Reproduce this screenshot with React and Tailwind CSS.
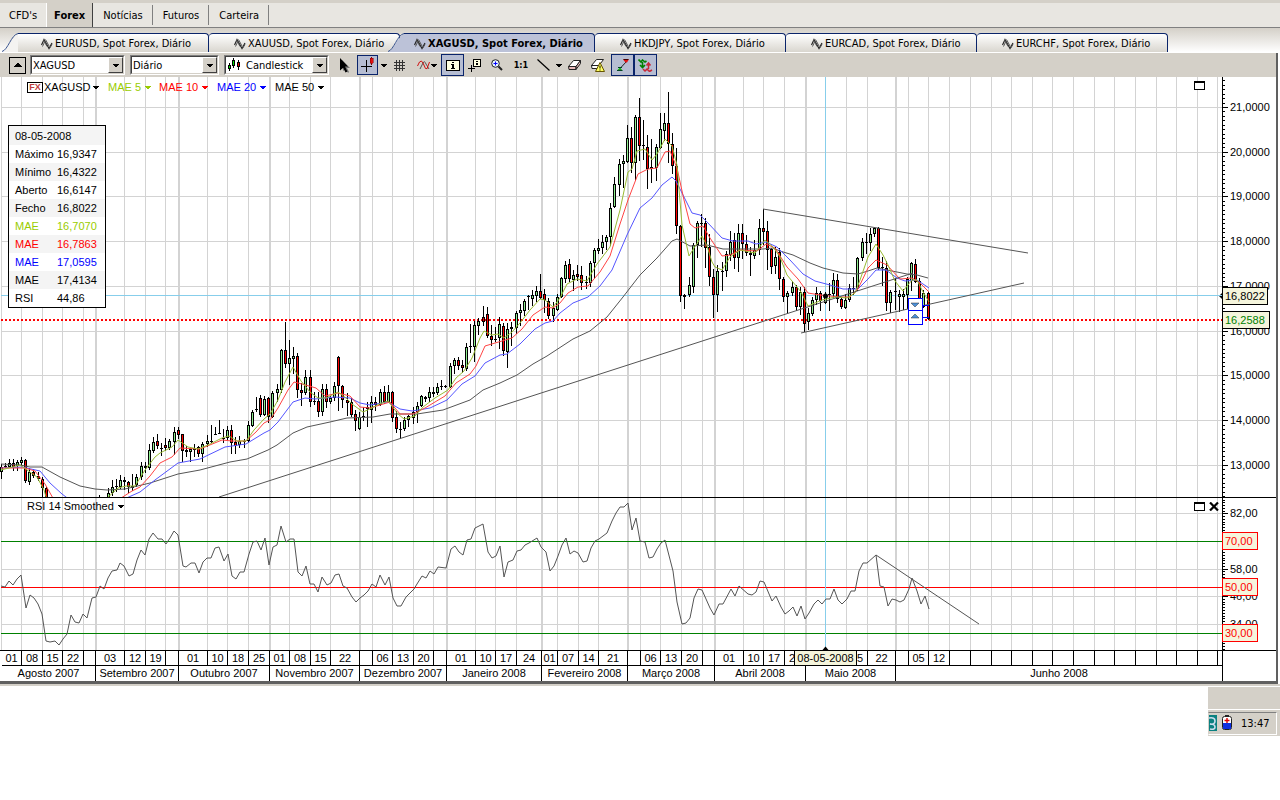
const menuTabs = ["CFD's", 'Forex', 'Notícias', 'Futuros', 'Carteira']

const chartTabs = [
  { label: 'EURUSD, Spot Forex, Diário', slanted: true },
  { label: 'XAUUSD, Spot Forex, Diário' },
  { label: 'XAGUSD, Spot Forex, Diário', active: true },
  { label: 'HKDJPY, Spot Forex, Diário' },
  { label: 'EURCAD, Spot Forex, Diário' },
  { label: 'EURCHF, Spot Forex, Diário' }
]

const infoRows = [
  { label: 'Máximo', value: '16,9347' },
  { label: 'Mínimo', value: '16,4322' },
  { label: 'Aberto', value: '16,6147' },
  { label: 'Fecho', value: '16,8022' },
  { label: 'MAE', value: '16,7070', color: 'text-[#99cc00]' },
  { label: 'MAE', value: '16,7863', color: 'text-[#ff0000]' },
  { label: 'MAE', value: '17,0595', color: 'text-[#0000ff]' },
  { label: 'MAE', value: '17,4134' },
  { label: 'RSI', value: '44,86' }
]

const legend = [
  { label: 'MAE 5', color: 'text-[#99cc00]', width: 'w-[51px]' },
  { label: 'MAE 10', color: 'text-[#ff0000]', width: 'w-[58px]' },
  { label: 'MAE 20', color: 'text-[#0000ff]', width: 'w-[58px]' },
  { label: 'MAE 50', color: 'text-black', width: 'w-[58px]' }
]

// Week columns: [label, width]
const months = [
  { label: 'Agosto 2007', weeks: [['01', 20], ['08', 21], ['15', 20], ['22', 21], ['', 12]] },
  { label: 'Setembro 2007', weeks: [['03', 29], ['12', 21], ['19', 20], ['', 13]] },
  { label: 'Outubro 2007', weeks: [['01', 29], ['10', 20], ['18', 21], ['25', 21]] },
  { label: 'Novembro 2007', weeks: [['01', 20], ['08', 21], ['15', 20], ['22', 29]] },
  { label: 'Dezembro 2007', weeks: [['', 13], ['06', 20], ['13', 21], ['20', 20], ['', 13]] },
  { label: 'Janeiro 2008', weeks: [['01', 29], ['10', 20], ['17', 21], ['24', 25]] },
  { label: 'Fevereiro 2008', weeks: [['01', 16], ['07', 21], ['14', 20], ['21', 29]] },
  { label: 'Março 2008', weeks: [['', 13], ['06', 20], ['13', 21], ['20', 21], ['', 12]] },
  { label: 'Abril 2008', weeks: [['01', 29], ['10', 20], ['17', 21], ['24', 21]] },
  { label: 'Maio 2008', weeks: [['', 20], ['', 21], ['15', 21], ['22', 28]] },
  {
    label: 'Junho 2008',
    weeks: [
      ['', 13], ['05', 20], ['12', 21], ['', 21], ['', 21], ['', 20], ['', 21], ['', 20],
      ['', 21], ['', 21], ['', 20], ['', 21], ['', 21], ['', 20], ['', 21], ['', 20]
    ]
  }
]

function buildGrid() {
  const lines = [{ x: 1, month: false }]
  let x = 1
  months.forEach((m, mi) => {
    m.weeks.forEach(([, width], wi) => {
      x += width
      lines.push({ x, month: wi === m.weeks.length - 1 && mi < months.length - 1 })
    })
  })
  return lines
}

const gridLines = buildGrid()

// Candles: [high, body top, body bottom, low, direction]
const U = 1
const D = -1
const N = 0
const gap = [600, 600, 600, 600, N]
const candles = [
  [464, 467, 472, 479, U], [463, 466, 467, 468, N], [459, 463, 467, 468, U], [459, 463, 467, 471, D],
  [460, 462, 466, 471, U], [457, 460, 463, 466, U], [459, 460, 481, 483, D], [468, 472, 482, 485, U],
  [469, 472, 476, 478, D], [472, 476, 479, 481, D], [477, 479, 488, 497, D], [487, 488, 499, 500, D],
  gap, gap, gap, gap, gap, gap, gap, gap, gap, gap, gap, gap,
  [495, 498, 499, 500, U], gap, [488, 493, 498, 499, U], [480, 487, 493, 496, U],
  [479, 486, 487, 492, N], [475, 480, 487, 489, U], [477, 480, 482, 490, D], [481, 482, 487, 493, D],
  [474, 486, 488, 491, D], [474, 477, 485, 487, U], [462, 466, 477, 480, U], [462, 466, 468, 473, D],
  [444, 450, 468, 470, U], [437, 442, 451, 453, U], [434, 441, 446, 449, D], [443, 448, 449, 456, N],
  [438, 445, 448, 451, D], [439, 441, 448, 450, U], [427, 432, 442, 455, U], [427, 430, 435, 439, D],
  [434, 434, 451, 462, D], [446, 450, 452, 457, D], [447, 449, 452, 462, U], [444, 448, 450, 457, D],
  [446, 447, 454, 457, D], [442, 444, 454, 462, U], [435, 441, 444, 447, U], [425, 441, 442, 443, N],
  [427, 434, 435, 435, N], [420, 433, 434, 434, N], [429, 438, 439, 443, N], [426, 430, 438, 441, U],
  [425, 430, 443, 454, D], [437, 442, 446, 454, D], [436, 441, 445, 448, U], [439, 441, 442, 448, N],
  [421, 425, 441, 443, U], [410, 412, 426, 427, U], [397, 409, 410, 412, N], [395, 398, 415, 417, D],
  [396, 399, 415, 416, U], [397, 398, 417, 423, D], [391, 393, 417, 418, U], [384, 389, 393, 402, U],
  [349, 350, 390, 393, U], [322, 350, 364, 368, D], [340, 358, 364, 385, U], [347, 356, 359, 374, U],
  [353, 356, 390, 398, D], [383, 390, 393, 406, D], [370, 377, 393, 395, U], [370, 377, 402, 407, D],
  [392, 401, 402, 405, N], [392, 401, 412, 417, D], [384, 389, 412, 416, U], [384, 389, 402, 408, D],
  [396, 398, 402, 404, U], [382, 386, 398, 401, U], [356, 357, 386, 411, D], [385, 386, 400, 408, D],
  [393, 400, 403, 416, D], [398, 402, 415, 417, D], [410, 414, 421, 431, D], [412, 417, 429, 430, U],
  [407, 416, 417, 421, N], [402, 407, 409, 427, D], [396, 402, 410, 423, U], [397, 402, 405, 411, D],
  [389, 392, 405, 406, U], [386, 392, 402, 404, D], [385, 392, 402, 403, U], [391, 392, 418, 422, D],
  [411, 417, 429, 433, D], [422, 429, 430, 439, N], [417, 420, 429, 431, U], [415, 416, 420, 427, U],
  [407, 412, 418, 424, U], [402, 406, 412, 423, U], [395, 396, 406, 407, U], [396, 397, 399, 402, D],
  [387, 392, 398, 402, U], [387, 392, 394, 397, D], [383, 387, 393, 395, U], [380, 386, 387, 390, N],
  [385, 386, 387, 388, N], [363, 366, 387, 388, U], [358, 360, 366, 374, U], [357, 360, 366, 370, D],
  [360, 365, 368, 373, D], [343, 347, 369, 371, U], [324, 346, 347, 353, N], [321, 325, 347, 362, U],
  [318, 321, 326, 335, U], [306, 317, 322, 326, D], [307, 314, 336, 338, D], [325, 336, 340, 346, D],
  [327, 339, 340, 342, N], [317, 324, 338, 349, U], [323, 326, 351, 356, D], [323, 329, 352, 368, U],
  [322, 327, 329, 346, U], [311, 313, 328, 334, U], [304, 310, 313, 326, U], [299, 301, 311, 316, U],
  [295, 296, 297, 310, N], [290, 295, 299, 306, U], [286, 291, 296, 302, U], [274, 291, 298, 299, D],
  [289, 294, 300, 313, D], [298, 301, 316, 319, D], [302, 308, 316, 322, U], [294, 297, 310, 311, U],
  [277, 278, 297, 298, U], [261, 265, 279, 283, U], [259, 264, 279, 282, D], [270, 275, 280, 291, U],
  [265, 274, 277, 281, D], [266, 275, 283, 290, D], [276, 282, 283, 289, N], [261, 263, 283, 287, U],
  [248, 250, 263, 279, U], [239, 248, 251, 254, U], [235, 242, 248, 254, U], [235, 237, 242, 250, U],
  [203, 208, 237, 246, U], [177, 184, 207, 208, U], [159, 164, 185, 196, U], [155, 161, 164, 188, U],
  [125, 138, 162, 163, U], [127, 138, 163, 173, D], [115, 117, 163, 181, U], [98, 117, 146, 161, D],
  [120, 145, 146, 160, N], [135, 147, 169, 189, D], [139, 167, 169, 183, N], [144, 147, 168, 181, U],
  [113, 129, 148, 149, U], [113, 123, 131, 141, U], [92, 123, 144, 163, D], [133, 144, 166, 174, D],
  [148, 166, 226, 234, D], [225, 226, 296, 302, D], [294, 295, 297, 309, N], [277, 285, 295, 297, U],
  [243, 245, 287, 293, U], [221, 223, 245, 258, U], [214, 223, 224, 247, N], [218, 223, 248, 268, D],
  [234, 247, 277, 286, D], [269, 277, 295, 318, D], [265, 271, 295, 312, U], [262, 271, 272, 291, N],
  [251, 254, 271, 277, U], [231, 242, 255, 261, U], [233, 240, 258, 269, D], [224, 233, 258, 272, U],
  [224, 233, 244, 259, D], [235, 244, 253, 256, D], [247, 253, 255, 276, N], [240, 250, 256, 259, U],
  [219, 228, 250, 255, U], [209, 228, 232, 245, D], [221, 231, 250, 270, D], [248, 249, 267, 274, D],
  [247, 257, 266, 274, U], [248, 252, 279, 290, D], [277, 279, 297, 302, D], [291, 293, 297, 313, U],
  [281, 287, 293, 296, U], [285, 287, 307, 311, D], [287, 292, 307, 315, U], [287, 292, 324, 332, D],
  [308, 313, 322, 330, U], [297, 300, 314, 316, U], [287, 293, 300, 305, U], [291, 293, 301, 311, D],
  [292, 295, 303, 304, U], [283, 294, 295, 311, N], [273, 280, 294, 298, U], [274, 280, 299, 303, D],
  [297, 299, 307, 309, D], [294, 300, 308, 309, U], [284, 288, 300, 302, U], [277, 288, 289, 295, N],
  [257, 258, 289, 291, U], [238, 242, 258, 261, U], [233, 242, 243, 254, N], [228, 234, 243, 251, U],
  [227, 228, 234, 237, U], [227, 228, 268, 270, D], [257, 267, 268, 286, N], [261, 268, 303, 311, D],
  [290, 292, 303, 313, U], [278, 291, 292, 310, N], [290, 294, 297, 312, U], [289, 294, 297, 310, U],
  [277, 279, 295, 309, U], [262, 263, 281, 291, U], [259, 264, 282, 283, D], [278, 281, 300, 305, D],
  [290, 293, 307, 308, U], [291, 293, 319, 320, D]
]

const mae5 =
  '1,470 20,465 27,470 37,477 44,490 47,500 105,500 118,488 126,486 135,486 145,470 155,457 160,453 172,447 178,440 188,447 198,449 208,445 222,438 229,436 237,441 246,441 254,430 264,419 270,414 278,400 285,382 293,367 301,381 310,392 318,398 326,398 338,392 346,398 352,404 363,412 372,408 379,404 388,401 398,414 404,419 415,416 423,407 435,398 448,390 456,378 464,371 472,358 480,338 484,331 492,335 498,334 504,338 512,332 520,323 530,310 540,299 545,300 553,307 560,298 567,284 577,279 587,281 597,264 610,247 620,210 628,172 632,169 637,151 645,149 652,160 657,154 665,139 672,146 677,165 682,225 689,256 694,248 702,236 707,246 712,262 715,267 722,270 730,257 740,250 755,253 765,240 773,247 780,257 787,275 797,287 801,292 808,306 822,300 835,297 847,298 855,293 860,280 868,257 876,244 883,255 888,265 895,281 903,291 912,280 917,280 922,290 929,302'
const mae10 =
  '1,468 25,468 35,471 45,484 54,500 118,500 132,491 140,487 150,476 160,463 172,457 180,448 200,449 222,440 232,441 246,441 256,432 264,423 270,420 278,408 288,390 294,382 302,384 316,388 325,396 338,393 350,396 360,407 370,408 390,402 400,414 413,414 425,408 445,396 456,383 470,374 476,366 485,346 495,343 502,341 512,338 522,329 533,315 545,307 553,308 560,303 568,293 578,287 588,286 600,272 610,256 620,224 628,200 638,174 648,169 657,168 665,152 670,151 677,168 684,200 690,224 695,228 703,226 710,238 722,256 730,255 740,250 757,251 766,244 775,248 787,267 798,279 808,293 820,295 840,297 850,297 858,289 868,268 876,260 887,265 900,279 912,278 920,283 929,292'
const mae20 =
  '1,468 22,467 40,471 50,483 62,494 70,500 122,500 140,492 155,480 178,463 200,459 225,447 246,444 264,433 270,430 278,422 293,402 305,398 315,399 335,397 350,398 360,403 370,405 388,402 400,409 412,411 430,408 447,400 462,384 475,376 485,363 500,355 507,354 520,344 535,329 545,323 553,321 560,313 573,303 588,297 600,286 612,270 627,235 640,208 652,198 662,185 672,177 676,181 683,195 692,213 700,215 708,223 722,238 733,241 748,241 756,244 766,242 777,247 790,260 803,274 815,281 830,285 843,289 858,289 868,279 876,270 886,270 897,278 905,281 917,280 929,288'
const mae50 =
  '1,464 20,465 30,467 42,467 60,477 80,486 95,489 107,490 125,489 150,483 178,474 200,470 230,462 247,459 268,450 277,445 293,433 307,427 330,422 347,418 373,417 390,414 417,414 443,410 470,400 483,390 500,383 517,375 533,364 547,356 573,339 590,331 607,317 623,297 640,275 657,258 672,241 677,239 690,246 707,245 723,249 743,249 763,249 773,248 780,251 793,255 810,263 823,268 843,273 858,274 868,271 877,268 887,270 907,274 917,275 928,278'
const rsi =
  '1,586 5,587 9,581 13,585 17,579 21,575 26,608 30,595 34,598 38,604 42,614 46,641 50,642 55,641 59,645 63,639 67,634 71,615 75,622 79,623 83,614 87,618 92,598 96,597 100,586 104,589 108,578 112,571 117,570 120,563 124,566 129,576 133,574 137,560 141,550 145,555 149,539 153,533 158,539 162,539 166,544 170,538 174,531 178,535 183,566 186,567 191,563 195,563 199,573 203,562 207,558 211,558 215,548 219,547 224,561 228,554 232,576 236,579 240,572 244,572 249,554 253,542 257,541 261,550 265,538 269,565 273,547 277,545 281,526 286,542 290,539 294,539 298,572 302,576 306,566 310,584 314,584 318,592 322,577 327,585 331,583 335,575 339,574 343,586 347,588 352,597 356,602 360,598 364,595 368,591 372,584 376,587 380,575 385,585 389,577 393,598 397,606 401,606 406,597 410,593 414,589 417,584 422,576 426,578 430,571 434,574 438,567 446,568 451,549 455,546 459,552 463,555 467,540 471,539 475,528 483,524 488,552 492,558 496,556 500,546 504,577 508,562 513,560 517,551 521,550 525,545 529,543 537,538 541,547 546,552 550,571 554,566 558,556 562,545 566,538 570,554 574,551 578,553 583,562 587,561 591,548 595,541 599,539 603,536 607,533 612,521 616,513 620,507 624,507 628,503 632,530 636,518 640,541 645,542 649,558 653,557 657,549 661,543 665,540 673,571 677,602 682,624 686,623 690,618 694,598 698,589 702,590 710,608 714,615 719,604 723,604 731,589 735,596 739,586 748,594 752,595 756,592 760,581 764,582 772,601 776,596 781,607 785,614 789,611 793,607 797,616 801,606 805,619 809,613 814,604 818,600 822,604 826,599 830,599 834,589 838,600 842,604 847,599 851,591 855,591 859,571 863,563 867,563 876,555 880,586 884,587 888,606 892,599 896,600 900,602 904,600 909,589 912,578 917,591 921,604 925,596 929,609'

const priceLevels = [21, 20, 19, 18, 17, 16, 15, 14, 13]
const rsiLevels = [82, 58, 46, 34]

const PRICE_TOP = 77
const RSI_TOP = 498
const CROSS_X = 825
const CROSS_Y = 295

const priceY = (price) => Math.round(107 + (21 - price) * 44.73)
const rsiY = (value) => Math.round(541 + (70 - value) * 2.3)

function Caret({ className = '' }) {
  return (
    <svg className={`h-[3px] w-[6px] shrink-0 fill-current ${className}`} viewBox="0 0 6 3" shapeRendering="crispEdges">
      <path d="M0 0H6V1H5V2H4V3H2V2H1V1H0Z" />
    </svg>
  )
}

function WaveIcon() {
  return (
    <svg className="h-3 w-3 shrink-0" viewBox="0 0 12 12" fill="none" stroke="#222">
      <path d="M0.5 7L3 1.5L8 10.5L11 5" strokeWidth="1.2" />
      <path d="M1.5 8.5L4 3M4.5 1.5L8 8M8.5 10.5L11 6.5M2.5 2L6 8.5" stroke="#555" />
    </svg>
  )
}

function TabSlant({ fill }) {
  return (
    <svg className="h-[19px] w-4 shrink-0" viewBox="0 0 16 19">
      <path d="M0 19C6 17 10 3 16 1V19Z" fill={fill} />
      <path d="M0 18.5C6 17 9 2 16 0.5" fill="none" stroke="#3a5590" />
    </svg>
  )
}

function ChartTab({ tab }) {
  const body = tab.active
    ? 'w-[191px] pl-2.5 bg-[#bcc2d8] font-bold rounded-tr'
    : tab.slanted
      ? 'w-[191px] pl-[23px] bg-gradient-to-b from-white to-[#d9d6cf] rounded-tr'
      : 'w-[191px] pl-[25px] bg-gradient-to-b from-white to-[#d9d6cf] rounded-t'
  return (
    <button type="button" className={`flex h-[19px] shrink-0 ${tab.active ? 'relative -ml-3' : ''} ${tab.slanted ? 'ml-0.5' : ''}`}>
      {(tab.slanted || tab.active) && <TabSlant fill={tab.active ? '#bcc2d8' : '#f4f3f1'} />}
      <span className={`flex h-[19px] items-center gap-0.5 whitespace-nowrap border-t border-r border-[#0a246a] pt-px ${body}`}>
        <WaveIcon />
        {tab.label}
      </span>
    </button>
  )
}

function Combo({ label, value, width, icon }) {
  return (
    <div className={`relative h-5 shrink-0 border border-t-[#808080] border-l-[#808080] border-r-white border-b-white ${width}`}>
      <select
        aria-label={label}
        className={`block h-[18px] w-full appearance-none border border-t-[#404040] border-l-[#404040] border-r-[#d4d0c8] border-b-[#d4d0c8] bg-white outline-none ${icon ? 'pl-5' : 'pl-px'}`}
      >
        <option>{value}</option>
      </select>
      {icon && <span className="pointer-events-none absolute top-0.5 left-[3px]">{icon}</span>}
      <span className="pointer-events-none absolute top-px right-px flex h-4 w-[15px] items-center justify-center border border-t-white border-l-white border-r-[#404040] border-b-[#404040] bg-[#d4d0c8]">
        <Caret />
      </span>
    </div>
  )
}

function CandlesIcon() {
  return (
    <svg className="h-[14px] w-3" viewBox="0 0 12 14" shapeRendering="crispEdges">
      <path d="M1 5H2V13H1ZM5 0H6V10H5ZM10 2H11V12H10Z" />
      <path d="M0 7H3V11H0ZM4 2H7V8H4ZM9 4H12V9H9Z" />
      <path d="M1 8H2V10H1ZM5 3H6V7H5Z" fill="#00e000" />
      <path d="M10 5H11V8H10Z" fill="#f00000" />
    </svg>
  )
}

function ToolButton({ label, active, width, className = '', children }) {
  return (
    <button
      type="button"
      aria-label={label}
      className={`flex shrink-0 items-center justify-center ${active ? 'border border-[#0a246a] bg-[#b6bdd2]' : ''} ${width} ${className}`}
    >
      {children}
    </button>
  )
}

function Toolbar() {
  return (
    <div className="flex h-6 items-center overflow-hidden bg-[#d4d0c8] pl-[9px]">
      <ToolButton label="Recolher" width="w-[17px]" className="h-[17px] border border-black">
        <svg className="h-1 w-2" viewBox="0 0 8 4" shapeRendering="crispEdges">
          <path d="M3 0H5V1H6V2H7V3H8V4H0V3H1V2H2V1H3Z" />
        </svg>
      </ToolButton>
      <Combo label="Símbolo" value="XAGUSD" width="ml-1 w-[95px]" />
      <Combo label="Período" value="Diário" width="ml-[5px] w-[89px]" />
      <Combo label="Tipo de gráfico" value="Candlestick" width="ml-[5px] w-[105px]" icon={<CandlesIcon />} />
      <ToolButton label="Cursor" width="ml-2.5 w-3">
        <svg className="h-[15px] w-3" viewBox="0 0 12 15">
          <path d="M3 2L11 10H8L10 14L9 15L7 11L4 13Z" fill="#777" />
          <path d="M1 0L9 8.5H6L8.5 13.5L6.5 14.5L4.2 9.8L1 12.5Z" />
        </svg>
      </ToolButton>
      <ToolButton label="Mira" active width="ml-1.5 w-[21px]" className="h-5">
        <svg className="h-4 w-[15px]" viewBox="0 0 15 16" shapeRendering="crispEdges">
          <path d="M6 3H7V15H6ZM1 9H12V10H1Z" />
          <path d="M11 0H12V8H11Z" fill="#800" />
          <path d="M10 1H13V6H10Z" fill="#e01010" stroke="#800" strokeWidth="0.5" />
        </svg>
      </ToolButton>
      <Caret className="ml-[3px]" />
      <ToolButton label="Grelha" width="ml-1.5 w-3">
        <svg className="h-[11px] w-[11px]" viewBox="0 0 11 11" shapeRendering="crispEdges" stroke="#333">
          <path d="M2.5 0V11M5.5 0V11M8.5 0V11M0 2.5H11M0 5.5H11M0 8.5H11" />
        </svg>
      </ToolButton>
      <ToolButton label="Indicadores" width="ml-3 w-[13px]">
        <svg className="h-[10px] w-[13px]" viewBox="0 0 13 10" fill="none">
          <path d="M3 9L6 3Q7.5 0 9 4L12 9" stroke="#555" />
          <path d="M0.5 6L2.5 2Q4.5-0.5 6 3L8.5 8.5Q10.5 10 11 6L12.5 2" stroke="#d01010" />
        </svg>
      </ToolButton>
      <Caret className="ml-px" />
      <ToolButton label="Informação" active width="ml-1 w-[23px]" className="h-[22px]">
        <svg className="h-[11px] w-[14px]" viewBox="0 0 14 11" shapeRendering="crispEdges">
          <rect width="14" height="11" />
          <rect x="1" y="1" width="12" height="9" fill="#ffffe1" />
          <path d="M6 2H8V3H6ZM5 4H8V8H9V9H5V8H6V5H5Z" />
        </svg>
      </ToolButton>
      <ToolButton label="Etiqueta" width="ml-[3px] w-[14px]">
        <svg className="h-[13px] w-[13px]" viewBox="0 0 13 13" shapeRendering="crispEdges">
          <rect x="5" width="8" height="8" />
          <rect x="6" y="1" width="6" height="6" fill="#ffffe1" />
          <path d="M8 2H10V3H8ZM8 4H10V6H8ZM3 6H4V13H3ZM0 9H7V10H0Z" />
        </svg>
      </ToolButton>
      <ToolButton label="Ampliar" width="ml-2.5 w-3">
        <svg className="h-3 w-3" viewBox="0 0 12 12" fill="none">
          <circle cx="4.5" cy="4.5" r="3.8" fill="#e8f4ff" stroke="#222" />
          <path d="M4.5 2.5V6.5M2.5 4.5H6.5" stroke="#00f" />
          <path d="M7.5 7.5L11 11" stroke="#222" strokeWidth="2" />
        </svg>
      </ToolButton>
      <ToolButton label="Escala 1:1" width="ml-2.5 w-4" className="text-[9px] font-bold">
        1:1
      </ToolButton>
      <ToolButton label="Linha" width="ml-2 w-[13px]">
        <svg className="h-3 w-[13px]" viewBox="0 0 13 12" stroke="#000">
          <path d="M0.5 0.5L12.5 11.5" strokeWidth="1.2" />
        </svg>
      </ToolButton>
      <Caret className="ml-1.5" />
      <ToolButton label="Apagar" width="ml-1.5 w-[13px]">
        <svg className="h-[10px] w-[13px]" viewBox="0 0 13 10" fill="#fff" stroke="#222">
          <path d="M5.5 0.5H12.5L8 6.5H0.5Z" />
          <path d="M0.5 6.5H8V9.5H1Z M8 6.5L12.5 0.5V3.5L8 9.5Z" fill="#e8b8b8" />
        </svg>
      </ToolButton>
      <ToolButton label="Apagar tudo" width="ml-2.5 w-[14px]">
        <svg className="h-[14px] w-[14px]" viewBox="0 0 14 14" fill="#fff" stroke="#222">
          <path d="M5.5 1.5H12.5L8 7.5H0.5ZM0.5 7.5H8V10.5H1Z" />
          <path d="M9 4.5L13.5 13.5H4.5Z" fill="#ffff60" stroke="#665500" />
          <path d="M9 7.5V10.5M9 11.5V12.5" stroke="#000" />
        </svg>
      </ToolButton>
      <ToolButton label="Linhas de tendência" active width="ml-1.5 w-[23px]" className="h-[22px]">
        <svg className="h-3 w-3" viewBox="0 0 12 12">
          <path d="M3 9.5L9.5 2.5" stroke="#222" />
          <path d="M6.5 0H11.5V1L10 3.5H8.5L6.5 1Z" fill="#e01010" />
          <path d="M6.5 0.5H11.5" stroke="#400" />
          <path d="M0 11.5H5.5L3 8.5Z" fill="#10b010" />
          <path d="M0 11.5H5.5M1 8.5H5" stroke="#042" />
        </svg>
      </ToolButton>
      <ToolButton label="Ordens" active width="w-[23px]" className="h-[22px]">
        <svg className="h-[13px] w-[15px]" viewBox="0 0 15 13" fill="none">
          <path d="M0.5 0.5L3 3L4.5 1L7 3L8.5 2M4.5 3V8M2 6L4.5 8.5L7 6" stroke="#008000" strokeWidth="1.6" />
          <path d="M5 10L7 12L9 10L11.5 12.5L14 11M10.5 10V4.5M8.5 6.5L10.5 4L12.5 6.5" stroke="#c82838" strokeWidth="1.5" />
        </svg>
      </ToolButton>
    </div>
  )
}

function VerticalGrid({ top, bottom }) {
  return gridLines.map(({ x, month }) => (
    <rect key={x} x={x} y={top} width={month ? 2 : 1} height={bottom - top} fill="#d3d3d3" />
  ))
}

function Candle({ index, bar }) {
  const [high, top, bottom, low, dir] = bar
  const x = Math.floor(1 + index * 4.12)
  return (
    <g>
      <rect x={x} y={high} width="1" height={low - high} />
      <rect x={x - 1} y={top} width="3" height={Math.max(1, bottom - top)} />
      {dir !== 0 && bottom - top > 2 && (
        <rect x={x} y={top + 1} width="1" height={bottom - top - 2} fill={dir > 0 ? '#90ee90' : '#ff0000'} />
      )}
    </g>
  )
}

function PricePlot() {
  return (
    <svg className="block h-[420px] w-full">
      <g transform={`translate(0 -${PRICE_TOP})`}>
        <g shapeRendering="crispEdges">
          <VerticalGrid top={77} bottom={497} />
          {priceLevels.map((p) => (
            <rect key={p} x="1" y={priceY(p)} width="100%" height="1" fill="#d3d3d3" />
          ))}
          <rect x="1" y={CROSS_Y} width="100%" height="1" fill="#87ceeb" />
          <rect x={CROSS_X} y="77" width="1" height="420" fill="#87ceeb" />
          <line x1="1" x2="100%" y1="320" y2="320" stroke="#ff0000" strokeWidth="2" strokeDasharray="2 2" />
          {candles.map((bar, i) => (
            <Candle key={i} index={i} bar={bar} />
          ))}
        </g>
        <g fill="none">
          <polyline points={mae50} stroke="#555" />
          <polyline points={mae20} stroke="#5555ff" />
          <polyline points={mae10} stroke="#ff4444" />
          <polyline points={mae5} stroke="#99bb33" />
          <path d="M219 497L913 273M763 209L1028 253M801 333L1024 283" stroke="#555" />
        </g>
        <circle cx={CROSS_X + 0.5} cy={CROSS_Y + 1} r="2.5" />
        <path d="M922 305.5H929M922 317.5H929" stroke="#0000ff" />
        <g stroke="#0000ff" fill="#fff">
          <rect x="908.5" y="298.5" width="14" height="12" />
          <rect x="908.5" y="310.5" width="14" height="14" />
        </g>
        <path d="M911 303H919L915 307Z" fill="#4a90d9" stroke="#333" strokeWidth="0.5" />
        <path d="M911 318H919L915 314Z" fill="#4a90d9" stroke="#333" strokeWidth="0.5" />
      </g>
    </svg>
  )
}

function RsiPlot() {
  return (
    <svg className="block h-[152px] w-full">
      <g transform={`translate(0 -${RSI_TOP})`}>
        <g shapeRendering="crispEdges">
          <VerticalGrid top={498} bottom={650} />
          {rsiLevels.map((v) => (
            <rect key={v} x="1" y={rsiY(v)} width="100%" height="1" fill="#d3d3d3" />
          ))}
          <rect x="1" y={rsiY(70)} width="100%" height="1" fill="#008000" />
          <rect x="1" y={rsiY(50)} width="100%" height="1" fill="#ff0000" />
          <rect x="1" y={rsiY(30)} width="100%" height="1" fill="#008000" />
          <rect x={CROSS_X} y="498" width="1" height="152" fill="#87ceeb" />
        </g>
        <g fill="none" stroke="#555">
          <polyline points={rsi} />
          <path d="M876 555L979 624" />
        </g>
        <path d="M822.5 650L825.5 646.5L828.5 650Z" />
      </g>
    </svg>
  )
}

function AxisTicks({ from, to, origin, step }) {
  const ticks = []
  for (let n = Math.ceil((from - origin) / step); origin + n * step < to; n++) {
    ticks.push(
      <rect key={n} x="1" y={Math.round(origin + n * step)} width={n % 10 === 0 ? 5 : 2} height="1" />
    )
  }
  return <g shapeRendering="crispEdges">{ticks}</g>
}

function AxisBadge({ y, width, height, text, border, color, fill = '#f5f5dc' }) {
  return (
    <g>
      <rect x="0.5" y={y + 0.5} width={width} height={height} fill={fill} stroke={border} shapeRendering="crispEdges" />
      <text x="3" y={y + 13} fill={color}>{text}</text>
    </g>
  )
}

function PriceAxis() {
  return (
    <svg className="block h-[420px] w-[54px] shrink-0 overflow-visible text-[11px]">
      <g transform={`translate(0 -${PRICE_TOP})`}>
        <rect width="1" y="77" height="420" shapeRendering="crispEdges" />
        <AxisTicks from={77} to={497} origin={107} step={4.473} />
        {priceLevels.map((p) => (
          <text key={p} x="8" y={priceY(p) + 4}>{`${p},0000`}</text>
        ))}
        <path d="M1 292V300L-3 296Z" />
        <AxisBadge y={287} width={45} height={17} text="16,8022" border="#000" color="#000" />
        <AxisBadge y={311} width={47} height={17} text="16,2588" border="#000" color="#008000" />
      </g>
    </svg>
  )
}

function RsiAxis() {
  return (
    <svg className="block h-[152px] w-[54px] shrink-0 text-[11px]">
      <g transform={`translate(0 -${RSI_TOP})`}>
        <rect width="1" y="498" height="152" shapeRendering="crispEdges" />
        <AxisTicks from={499} to={650} origin={541} step={2.76} />
        {rsiLevels.map((v) => (
          <text key={v} x="8" y={rsiY(v) + 4}>{`${v},00`}</text>
        ))}
        {[70, 50, 30].map((v) => (
          <AxisBadge key={v} y={rsiY(v) - 9} width={35} height={17} text={`${v},00`} border="#f00" color="#f00" />
        ))}
      </g>
    </svg>
  )
}

function MaximizeButton() {
  return (
    <button type="button" aria-label="Maximizar" className="h-[9px] w-[11px] border border-t-2 border-black bg-white" />
  )
}

function Legend() {
  return (
    <div className="absolute top-1 left-[27px] flex h-[13px] items-center">
      <button type="button" className="flex w-[81px] items-center gap-px text-left">
        <span className="flex h-[11px] w-4 shrink-0 items-center justify-center border border-black bg-white text-[9px] font-bold text-[#c04040]">
          FX
        </span>
        XAGUSD
        <Caret className="ml-0.5" />
      </button>
      {legend.map((item) => (
        <button type="button" key={item.label} className={`flex items-center gap-1 whitespace-nowrap ${item.color} ${item.width}`}>
          {item.label}
          <Caret />
        </button>
      ))}
    </div>
  )
}

function InfoTable() {
  return (
    <div className="absolute top-12 left-2 border border-black bg-white">
      <table className="w-24 border-collapse leading-[18px]">
        <thead>
          <tr className="h-[19px] bg-[#f4f4f4]">
            <th colSpan={2} className="pl-1.5 text-left font-normal">08-05-2008</th>
          </tr>
        </thead>
        <tbody>
          {infoRows.map((row, i) => (
            <tr key={i} className={`h-[18px] even:bg-[#f4f4f4] ${row.color || ''}`}>
              <td className="w-12 pl-1.5">{row.label}</td>
              <td>{row.value}</td>
            </tr>
          ))}
        </tbody>
      </table>
    </div>
  )
}

function DateAxis() {
  return (
    <div className="flex border-t border-black">
      <div className="relative flex min-w-0 flex-1 pl-0.5">
        {months.map((m, mi) => {
          const last = mi === months.length - 1
          return (
            <div key={m.label} className={`flex flex-col overflow-hidden ${last ? 'flex-1' : 'shrink-0 border-r border-black'}`}>
              <div className="flex h-[15px] border-b border-black">
                {m.weeks.map(([label, width], wi) => {
                  const edge = !last && wi === m.weeks.length - 1
                  return (
                    <div
                      key={wi}
                      className={`flex shrink-0 items-center justify-center ${edge ? '' : 'border-r border-black'}`}
                      style={{ width: edge ? width - 1 : width }}
                    >
                      {label}
                    </div>
                  )
                })}
              </div>
              <div className="flex h-[15px] items-center justify-center whitespace-nowrap">{m.label}</div>
            </div>
          )
        })}
        <div className="absolute top-0 flex h-[14px] w-[63px] items-center justify-center border-x border-black bg-[#f5f5dc]" style={{ left: CROSS_X - 31 }}>
          08-05-2008
        </div>
      </div>
      <div className="w-[54px] shrink-0 border-l border-black" />
    </div>
  )
}

function Tray() {
  return (
    <div className="mt-px ml-auto w-[72px] bg-[#d4d0c8]">
      <div className="h-[23px] border-b border-white" />
      <div className="flex h-[26px] items-center py-px">
        <div className="flex h-[23px] w-[69px] items-center border border-t-[#808080] border-r-white border-b-white border-l-transparent">
          <svg className="h-4 w-2 shrink-0" viewBox="0 0 8 16">
            <rect width="8" height="16" fill="#0a8080" />
            <path d="M0 3Q6 2 6 6T1 9Q6 9 6 12T1 14" fill="none" stroke="#cde" strokeWidth="1.6" />
          </svg>
          <svg className="ml-1 h-4 w-3 shrink-0" viewBox="0 0 12 16">
            <rect x="1.5" y="1.5" width="9" height="13" rx="2" fill="#fff" stroke="#222" />
            <rect x="2" y="8" width="8" height="6" fill="#1030e0" />
            <path d="M4 0.5H8" stroke="#222" />
            <path d="M6 3V8M3.5 5.5H8.5" stroke="#e00000" strokeWidth="1.4" />
          </svg>
          <span className="ml-2">13:47</span>
        </div>
      </div>
    </div>
  )
}

export default function App() {
  return (
    <div className="min-h-screen overflow-hidden bg-white font-['DejaVu_Sans_Condensed','DejaVu_Sans',sans-serif] text-[11px] leading-[13px] text-black">
      <nav className="flex h-7 border-t-[3px] border-t-[#d4d0c8] border-b border-b-[#808080] bg-[#e8e6e1]">
        {menuTabs.map((label) => (
          <a
            key={label}
            href="#"
            className={
              label === 'Forex'
                ? 'flex items-center border-l border-l-white border-r border-r-[#404040] bg-[#d4d0c8] px-[7px] font-bold'
                : label === "CFD's"
                  ? 'flex items-center px-[9px]'
                  : 'my-0.5 flex items-center border-r border-[#808080] pr-[9px] pl-2.5'
            }
          >
            {label}
          </a>
        ))}
      </nav>

      <div className="flex h-[25px] items-end overflow-hidden border-b border-white bg-gradient-to-b from-[#d4d0c8] to-white">
        {chartTabs.map((tab) => (
          <ChartTab key={tab.label} tab={tab} />
        ))}
      </div>

      <main className="mr-0.5 border-r-2 border-b-[3px] border-[#606060]">
        <Toolbar />
        <div className="font-['Liberation_Sans',Arial,sans-serif]">
          <section className="flex border-b border-black">
            <div className="relative min-w-0 flex-1">
              <PricePlot />
              <Legend />
              <InfoTable />
              <div className="absolute top-1 right-[17px] flex">
                <MaximizeButton />
              </div>
            </div>
            <PriceAxis />
          </section>

          <section className="flex">
            <div className="relative min-w-0 flex-1">
              <RsiPlot />
              <button type="button" className="absolute top-0.5 left-[27px] flex items-center gap-1">
                RSI 14 Smoothed
                <Caret />
              </button>
              <div className="absolute top-1 right-[3px] flex items-center gap-1">
                <MaximizeButton />
                <button type="button" aria-label="Fechar">
                  <svg className="h-[9px] w-[10px]" viewBox="0 0 10 9" stroke="#000">
                    <path d="M1 0.5L9 8.5M9 0.5L1 8.5" strokeWidth="2.2" />
                  </svg>
                </button>
              </div>
            </div>
            <RsiAxis />
          </section>

          <DateAxis />
        </div>
      </main>
      <div className="h-0.5 bg-[#d4d0c8]" />
      <Tray />
    </div>
  )
}
